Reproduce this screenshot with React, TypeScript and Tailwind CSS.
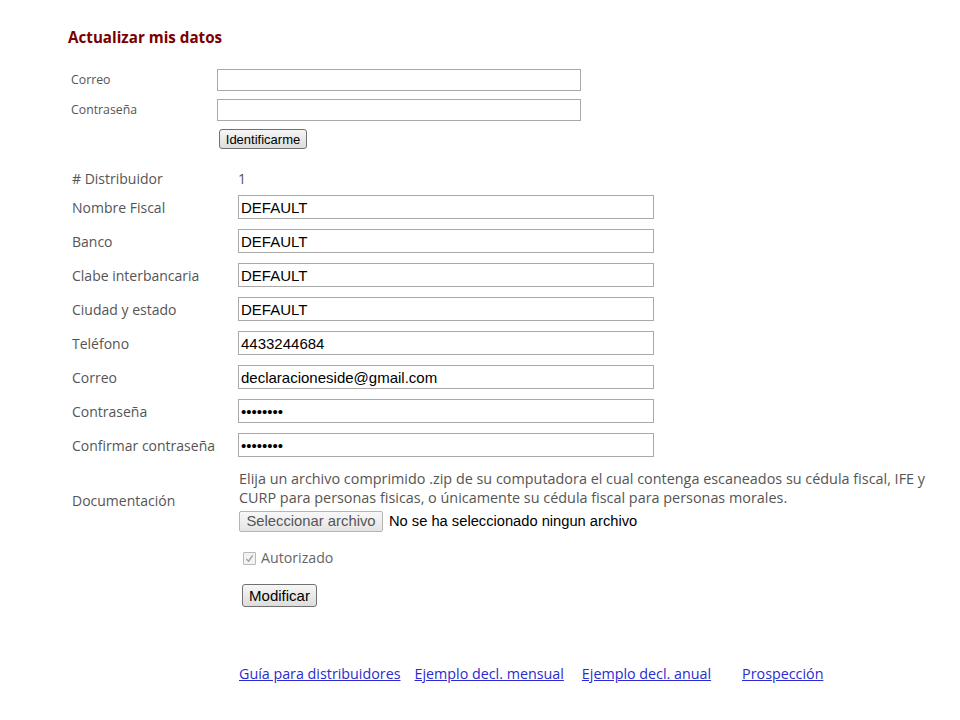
import React from "react";

const labelFont = { fontFamily: '"Open Sans", "Noto Sans", sans-serif' };
const arial = { fontFamily: '"Liberation Sans", Arial, sans-serif' };

function Field({ label, value, type = "text" }: { label: string; value: string; type?: string }) {
  return (
    <div className="flex items-center h-[34px]">
      <div className="w-[166px] text-[14px] text-[#555555]">{label}</div>
      <input
        readOnly
        type={type}
        defaultValue={value}
        className="w-[416px] h-[24px] border border-[#a9a9a9] bg-white px-[2px] text-[15px] text-black outline-none"
        style={arial}
      />
    </div>
  );
}

export default function App() {
  return (
    <div className="bg-white min-h-[720px] w-[960px] pl-[68px] pt-[27px]" style={labelFont}>
      <h1 className="text-[15.2px] font-bold text-[#7a0000] leading-[20px]">Actualizar mis datos</h1>

      <div className="mt-[18px] pl-[3px]">
        <div className="flex items-center h-[30px]">
          <div className="w-[146px] text-[12.3px] text-[#555555]">Correo</div>
          <input readOnly className="w-[364px] h-[22px] border border-[#a9a9a9] bg-white outline-none" />
        </div>
        <div className="flex items-center h-[30px]">
          <div className="w-[146px] text-[12.3px] text-[#555555]">Contraseña</div>
          <input readOnly className="w-[364px] h-[22px] border border-[#a9a9a9] bg-white outline-none" />
        </div>
        <div className="pl-[148px] mt-[1px]">
          <button
            className="h-[20px] w-[88px] text-[13px] text-black border border-[#707070] rounded-[3px] bg-gradient-to-b from-[#f6f6f6] to-[#dddddd]"
            style={arial}
          >
            Identificarme
          </button>
        </div>
      </div>

      <div className="mt-[16px] pl-[4px]">
        <div className="flex items-center h-[24px]">
          <div className="w-[166px] text-[14px] text-[#555555]"># Distribuidor</div>
          <div className="text-[14px] text-[#555555]">1</div>
        </div>
        <Field label="Nombre Fiscal" value="DEFAULT" />
        <Field label="Banco" value="DEFAULT" />
        <Field label="Clabe interbancaria" value="DEFAULT" />
        <Field label="Ciudad y estado" value="DEFAULT" />
        <Field label="Teléfono" value="4433244684" />
        <Field label="Correo" value="declaracioneside@gmail.com" />
        <Field label="Contraseña" value="password" type="password" />
        <Field label="Confirmar contraseña" value="password" type="password" />

        <div className="flex items-center mt-[7px]">
          <div className="w-[166px] text-[14px] text-[#555555]">Documentación</div>
          <div className="w-[700px]">
            <p className="text-[14.4px] leading-[19px] text-[#555555] pl-[1px]">
              Elija un archivo comprimido .zip de su computadora el cual contenga escaneados su cédula fiscal, IFE y
              CURP para personas fisicas, o únicamente su cédula fiscal para personas morales.
            </p>
            <div className="flex items-center mt-[3px] pl-[1px]" style={arial}>
              <span className="h-[21px] w-[144px] flex items-center justify-center text-[14.8px] text-[#555555] border border-[#b5b5b5] rounded-[2px] bg-gradient-to-b from-[#f8f8f8] to-[#e4e4e4]">
                Seleccionar archivo
              </span>
              <span className="ml-[6px] text-[14.7px] text-black">No se ha seleccionado ningun archivo</span>
            </div>
          </div>
        </div>

        <div className="pl-[166px]">
          <div className="flex items-center mt-[16px] h-[20px]">
            <span className="ml-[5px] w-[13px] h-[13px] border border-[#b8b8b8] bg-[#f2f2f2] flex items-center justify-center rounded-[1px]">
              <svg viewBox="0 0 10 10" className="w-[9px] h-[9px]">
                <path d="M1.5 5.5 L4 8 L8.5 1.5" stroke="#a0a0a0" strokeWidth="1.5" fill="none" />
              </svg>
            </span>
            <span className="ml-[5px] text-[14.2px] text-[#666666]">Autorizado</span>
          </div>
          <button
            className="mt-[16px] ml-[4px] h-[23px] w-[75px] text-[15px] text-black border border-[#707070] rounded-[3px] bg-gradient-to-b from-[#f6f6f6] to-[#dddddd]"
            style={arial}
          >
            Modificar
          </button>
        </div>
      </div>

      <div className="mt-[56px] pl-[171px] flex text-[14.3px] text-[#2b2bd0]">
        <a className="underline">Guía para distribuidores</a>
        <a className="underline ml-[14px]">Ejemplo decl. mensual</a>
        <a className="underline ml-[18px]">Ejemplo decl. anual</a>
        <a className="underline ml-[31px]">Prospección</a>
      </div>
    </div>
  );
}
